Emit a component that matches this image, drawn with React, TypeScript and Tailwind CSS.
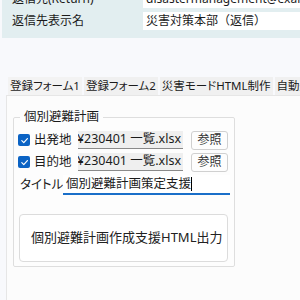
import React from "react";

const font = "font-['Noto_Sans','Noto_Sans_CJK_JP',sans-serif]";
const palt = "[font-feature-settings:'palt']";

function Check() {
  return (
    <span className="flex h-[12px] w-[12px] shrink-0 items-center justify-center rounded-[2px] bg-[#0b63c4]">
      <svg width="9" height="9" viewBox="0 0 10 10" fill="none">
        <path d="M2 5.2 L4.2 7.3 L8.2 2.8" stroke="#fff" strokeWidth="1.3" strokeLinecap="round" strokeLinejoin="round" />
      </svg>
    </span>
  );
}

function FileRow({ label }: { label: string }) {
  return (
    <div className="flex h-[18px] items-center">
      <div className="flex w-[60px] shrink-0 items-center gap-[4px]">
        <Check />
        <span className={`whitespace-nowrap text-[12.5px] leading-none text-[#1b1b1b] ${palt}`}>{label}</span>
      </div>
      <div className="flex h-[18px] w-[105px] shrink-0 items-center justify-end overflow-hidden border-b border-[#8a8a8a] bg-[#efefef] pr-[2px]">
        <span className="whitespace-nowrap text-[12.5px] leading-none text-[#1b1b1b]">)¥230401 一覧.xlsx</span>
      </div>
      <button className="ml-[8px] flex h-[19px] w-[37px] shrink-0 items-center justify-center rounded-[3px] border border-[#d0d0d0] bg-[#fdfdfd] text-[12px] leading-none text-[#333]">
        参照
      </button>
    </div>
  );
}

export default function App() {
  const tabs = ["登録フォーム1", "登録フォーム2", "災害モードHTML制作", "自動送信設定"];
  return (
    <div className={`h-[300px] w-[300px] overflow-hidden bg-[#f8f9fc] ${font}`}>
      {/* header settings panel */}
      <div className="-mt-[14px] ml-[2px] flex h-[52px] flex-col gap-[4px] bg-[#e2eef0] pt-[4px]">
        <div className="flex h-[18px] items-center">
          <span className="w-[141px] shrink-0 pl-[10px] text-[12px] text-[#1b1b1b]">返信先(Return)</span>
          <div className="flex h-[18px] flex-1 items-center overflow-hidden bg-white pl-[3px]">
            <span className="whitespace-nowrap text-[12px] text-[#1b1b1b]">disastermanagement@example.jp</span>
          </div>
        </div>
        <div className="flex h-[18px] items-center">
          <span className="w-[141px] shrink-0 pl-[10px] text-[12px] text-[#1b1b1b]">返信先表示名</span>
          <div className="flex h-[18px] flex-1 items-center overflow-hidden bg-white pl-[3px]">
            <span className="whitespace-nowrap text-[12px] text-[#1b1b1b]">災害対策本部（返信）</span>
          </div>
        </div>
      </div>

      {/* tabs */}
      <div className="ml-[8px] mt-[39px] flex h-[18px] gap-[2px] overflow-hidden">
        {tabs.map((t, i) => (
          <div
            key={t}
            className={`flex h-[18px] shrink-0 items-center whitespace-nowrap px-[2px] text-[11.5px] leading-none text-[#1b1b1b] ${palt} ${
              i === 0 ? "bg-[#f3f3f3]" : "bg-[#f0f0f0]"
            }`}
          >
            {t}
          </div>
        ))}
      </div>

      {/* tab page */}
      <div className="ml-[6px] h-[220px] border-l border-t border-[#e6e6e6] bg-[#fcfcfc] pt-[12px]">
        <fieldset className="ml-[6px] w-[221px] rounded-[2px] border border-[#dedede] bg-[#fdfdfd] px-[4px] pb-[4px]">
          <legend className="ml-[2px] px-[4px] text-[12.5px] leading-[18px] text-[#1b1b1b]">個別避難計画</legend>
          <div className="mt-[5px] flex flex-col gap-[4px]">
            <FileRow label="出発地" />
            <FileRow label="目的地" />
            <div className="flex h-[20px] items-center">
              <span className={`w-[45px] shrink-0 whitespace-nowrap pl-[2px] text-[12.5px] leading-none text-[#1b1b1b] ${palt}`}>タイトル</span>
              <div className="flex h-[20px] w-[167px] shrink-0 items-center border-b-2 border-[#1a6fc9] bg-white pl-[3px]">
                <span className="whitespace-nowrap text-[12.5px] leading-none text-[#1b1b1b]">個別避難計画策定支援</span>
                <span className="h-[14px] border-l border-black" />
              </div>
            </div>
          </div>
          <button className="ml-[1px] mt-[19px] flex h-[48px] w-[209px] items-center rounded-[4px] border border-[#dcdcdc] bg-white pl-[11px] text-[13px] text-[#222]">
            個別避難計画作成支援HTML出力
          </button>
        </fieldset>
      </div>
    </div>
  );
}
